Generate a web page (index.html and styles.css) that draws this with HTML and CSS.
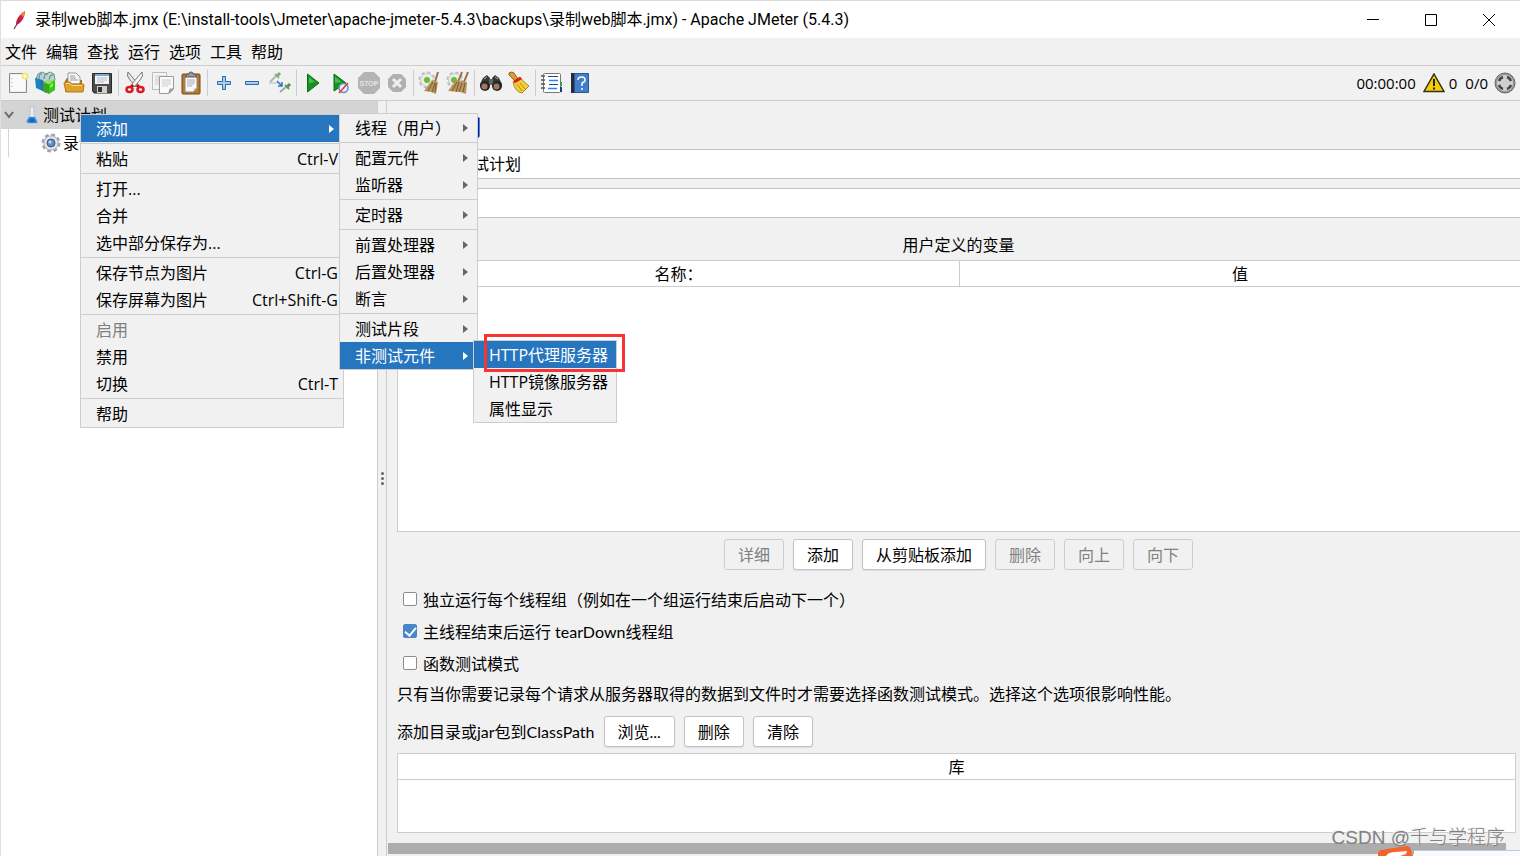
FILE: index.html
```html
<!DOCTYPE html>
<html lang="zh-CN">
<head>
  <meta charset="UTF-8">
  <meta name="viewport" content="width=device-width, initial-scale=1.0">
  <title>Apache JMeter (5.4.3)</title>
  <link rel="stylesheet" href="styles.css">
</head>
<body>
  <!-- Title bar -->
  <header class="titlebar">
    <svg class="app-icon" viewBox="0 0 16 20">
      <path d="M2 19L5 14" stroke="#7a3b8f" stroke-width="1.3"/>
      <path d="M4 15Q4 9 8 5Q11 2 13 1Q13 5 11 9Q8 14 4 15Z" fill="#d0223c"/>
      <path d="M9 5Q11 2 13 1Q13 4 11 7Z" fill="#f28a2e"/>
      <path d="M4 15Q5 12 6 9L8 11Q6 14 4 15Z" fill="#9b1f6b"/>
    </svg>
    <h1 class="window-title">录制web脚本.jmx (E:\install-tools\Jmeter\apache-jmeter-5.4.3\backups\录制web脚本.jmx) - Apache JMeter (5.4.3)</h1>
    <div class="window-buttons">
      <button aria-label="最小化"><svg viewBox="0 0 12 12"><path d="M0 5.5H12" stroke="#000"/></svg></button>
      <button aria-label="最大化"><svg viewBox="0 0 12 12"><path d="M.5 .5H11.5V11.5H.5Z" fill="none" stroke="#000"/></svg></button>
      <button aria-label="关闭"><svg viewBox="0 0 12 12"><path d="M0 0L12 12M12 0L0 12" stroke="#000"/></svg></button>
    </div>
  </header>

  <!-- Menu bar -->
  <nav class="menubar">
    <button>文件</button>
    <button>编辑</button>
    <button>查找</button>
    <button>运行</button>
    <button>选项</button>
    <button>工具</button>
    <button>帮助</button>
  </nav>

  <!-- Toolbar -->
  <div class="toolbar">
    <div class="tool-group">
      <button aria-label="新建"><svg viewBox="0 0 24 24">
        <path d="M3.5 2.500H20.500V21.500H3.500Z" fill="#f0f0f0" stroke="#8b8b8b"/>
        <path d="M5 4H19V20H5Z" fill="#fafafa"/><path d="M6 7V8M6 11V12M6 15V16" stroke="#aaa"/>
        <circle cx="19" cy="5" r="3.500" fill="#f6e67c"/><circle cx="19" cy="5" r="1.500" fill="#fffde0"/>
      </svg></button>
      <button aria-label="模板"><svg viewBox="0 0 24 24">
        <path d="M2 8L4 3L8 1L12 3L16 1L20 3L21 9L13 12Z" fill="#b9d3d8" stroke="#6f8d92"/>
        <path d="M5 8Q5 2 8 3M10 8Q10 2 14 3M15 8Q16 3 19 4" fill="none" stroke="#567d84"/>
        <path d="M1 7L9 9V20L2 17Z" fill="#1887b8"/><path d="M6 9L12 11V22L7 19Z" fill="#2b6fc0"/>
        <path d="M9 11L15 13V23L9 20Z" fill="#3ca51e"/><path d="M9 11L15 8L21 9L15 13Z" fill="#95dc69"/>
        <path d="M15 13L21 9V19L15 23Z" fill="#35c90f"/><path d="M16 14L19 12V15L16 17Z" fill="#8af062"/>
      </svg></button>
      <button aria-label="打开"><svg viewBox="0 0 24 24">
        <path d="M3 10L5 7H9L10 9H20V21H3Z" fill="#9e6910"/>
        <path d="M6 2H14L18 6V13H6Z" fill="#fafafa" stroke="#999"/><path d="M8 5H13M8 7H14M8 9H16" stroke="#999"/>
        <path d="M2 12Q2 11 4 11H8L10 13H21Q22 13 22 15L21 21H4Z" fill="#dda42c" stroke="#b57918"/>
        <path d="M4 12.500H8L10 14.500H20" fill="none" stroke="#f9db8c"/>
      </svg></button>
      <button aria-label="保存"><svg viewBox="0 0 24 24">
        <path d="M2.500 2.500H21.500V22H4L2.500 20Z" fill="#4c4c4c" stroke="#292929"/>
        <path d="M5 3H19V13H5Z" fill="#f0f4f7"/><path d="M5 3H19V5H5Z" fill="#79a8d2"/>
        <path d="M7 7H17M7 9H17M7 11H14" stroke="#b5c2cc"/>
        <path d="M7 15H17V22H7Z" fill="#d0d0d0"/><path d="M8 16H12V21H8Z" fill="#333"/>
      </svg></button>
    </div>
    <div class="tool-group">
      <button aria-label="剪切"><svg viewBox="0 0 24 24">
        <path d="M5 1Q3 5 7 9L13 16L15 13Z" fill="#e6e6e6" stroke="#777"/><path d="M19 1Q21 5 17 9L11 16L9 13Z" fill="#fafafa" stroke="#777"/>
        <path d="M10 14L8 16M14 14L16 16" stroke="#c40812" stroke-width="3"/>
        <ellipse cx="6.500" cy="18.500" rx="3" ry="2.500" fill="#eee" stroke="#dc1a22" stroke-width="2.500"/>
        <ellipse cx="17.500" cy="18.500" rx="3" ry="2.500" fill="#eee" stroke="#dc1a22" stroke-width="2.500"/>
      </svg></button>
      <button aria-label="复制"><svg viewBox="0 0 24 24">
        <path d="M1.500 1.500H15.500V18.500H1.500Z" fill="#f5f5f5" stroke="#bbb"/><path d="M4 5H13M4 7H13M4 9H8M4 11H8M4 13H8" stroke="#ccc"/>
        <path d="M8.500 5.500H22.500V18L18 22.500H8.500Z" fill="#fafafa" stroke="#999"/><path d="M11 9H20M11 11H20M11 13H20M11 15H17" stroke="#ccc"/>
        <path d="M18 22L19 18H22Z" fill="#ccc" stroke="#888"/>
      </svg></button>
      <button aria-label="粘贴"><svg viewBox="0 0 24 24">
        <rect x="3" y="3" width="18" height="20" rx="1" fill="#b77a28" stroke="#764a0f"/>
        <path d="M6 5H18V17L14 21H6Z" fill="#fafafa" stroke="#888"/>
        <path d="M8 9H16M8 11H16M8 13H15M8 15H13" stroke="#aaa"/><path d="M14 21L15 17H18Z" fill="#ccc"/>
        <path d="M8 3H10Q10 1 12 1Q14 1 14 3H16L18 6H6Z" fill="#999" stroke="#555"/>
      </svg></button>
    </div>
    <div class="tool-group">
      <button aria-label="展开"><svg viewBox="0 0 24 24"><path d="M10.500 5.500H13.500V10.500H18.500V13.500H13.500V18.500H10.500V13.500H5.500V10.500H10.500Z" fill="#a8ccec" stroke="#3067ae"/></svg></button>
      <button aria-label="收起"><svg viewBox="0 0 24 24"><path d="M5.500 10.500H18.500V13.500H5.500Z" fill="#a8ccec" stroke="#3067ae"/></svg></button>
      <button aria-label="切换"><svg viewBox="0 0 24 24">
        <path d="M2 11L8 5" stroke="#b5b5b5" stroke-width="2"/><path d="M7 3L11 7" stroke="#8ab87d" stroke-width="2"/><path d="M9 5L12 2" stroke="#7cae6e" stroke-width="3"/>
        <path d="M1 12H10" stroke="#bbb"/><path d="M9 10L14 15M14 11V15H10" fill="none" stroke="#2876d2" stroke-width="1.500"/>
        <path d="M12 21L18 16" stroke="#a5a5a5" stroke-width="2"/><path d="M17 14L21 18" stroke="#6b9c60" stroke-width="2"/><path d="M19 16L22 13" stroke="#5d9150" stroke-width="3"/>
      </svg></button>
    </div>
    <div class="tool-group">
      <button aria-label="启动"><svg viewBox="0 0 24 24"><path d="M6.500 3V21L18 12Z" fill="#159321" stroke="#087014"/><path d="M8 6V12L14 11Z" fill="#4bbb50"/></svg></button>
      <button aria-label="不停顿开始"><svg viewBox="0 0 24 24">
        <path d="M5 3V20L17 12Z" fill="#159321" stroke="#087014"/><path d="M6 6V12L13 11Z" fill="#4bbb50"/>
        <circle cx="14.500" cy="17" r="4.500" fill="#e8edf8" stroke="#6b8abf" stroke-width="1.500"/><path d="M10 22L19 12" stroke="#d73934" stroke-width="1.500"/>
      </svg></button>
      <button aria-label="停止" disabled><svg viewBox="0 0 24 24">
        <path d="M7 1H17L23 7V17L17 23H7L1 17V7Z" fill="#b4b4b4"/>
        <text x="12" y="15" class="stop-text">STOP</text>
      </svg></button>
      <button aria-label="关闭线程" disabled><svg viewBox="0 0 24 24">
        <path d="M8 3H16L21 8V16L16 21H8L3 16V8Z" fill="#b0b0b0"/><path d="M8 8L16 16M16 8L8 16" stroke="#eee" stroke-width="3"/>
      </svg></button>
    </div>
    <div class="tool-group">
      <button aria-label="清除"><svg viewBox="0 0 24 24">
        <circle cx="9" cy="9" r="7" fill="none" stroke="#bdbdbd" stroke-width="3" stroke-dasharray="3 2.500"/><circle cx="9" cy="9" r="6.500" fill="#ececec" stroke="#ccc"/><circle cx="9" cy="9" r="3" fill="#63bd35"/>
        <path d="M20 1L17 11" stroke="#9a6f42" stroke-width="2"/><path d="M14 9L20 11L18 23L13 21L6 20Z" fill="#b8945f"/><path d="M15 11L10 20M17 12L14 21M18 12L17 21" stroke="#7a5833"/>
      </svg></button>
      <button aria-label="清除全部"><svg viewBox="0 0 24 24">
        <circle cx="9" cy="9" r="7" fill="none" stroke="#bdbdbd" stroke-width="3" stroke-dasharray="3 2.500"/><circle cx="9" cy="9" r="6.500" fill="#ececec" stroke="#ccc"/><circle cx="8" cy="9" r="3" fill="#63bd35"/>
        <path d="M16 1L12 11M22 1L18 11" stroke="#9a6f42" stroke-width="2"/><path d="M10 9L21 11L20 23L14 21L2 20Z" fill="#b8945f"/><path d="M11 11L6 20M13 11L10 21M16 12L13 21M19 12L17 21" stroke="#7a5833"/>
      </svg></button>
    </div>
    <div class="tool-group">
      <button aria-label="查找"><svg viewBox="0 0 24 24">
        <path d="M4 7L8 4L11 7V16H1V13ZM20 7L16 4L13 7V16H23V13Z" fill="#383838"/><path d="M10 8H14V14H10Z" fill="#666"/>
        <circle cx="6" cy="15" r="5" fill="#262626"/><circle cx="18" cy="15" r="5" fill="#262626"/>
        <circle cx="5.500" cy="15.500" r="3" fill="#a27662"/><circle cx="17.500" cy="15.500" r="3" fill="#a27662"/>
        <path d="M5 8L8 6M16 6L19 8" stroke="#aaa"/>
      </svg></button>
      <button aria-label="重置查找"><svg viewBox="0 0 24 24">
        <path d="M2 2Q5 0 7 2L11 8L8 10L2 4Z" fill="#d99b36" stroke="#9a601a"/>
        <path d="M6 11L13 6Q16 11 22 15L15 22Q8 21 6 11Z" fill="#f0cf39" stroke="#af8912"/>
        <path d="M7 11L14 7" stroke="#d82017" stroke-width="3"/><path d="M10 13L15 20M13 12L18 18" stroke="#b58d15"/>
      </svg></button>
    </div>
    <div class="tool-group">
      <button aria-label="函数助手"><svg viewBox="0 0 24 24">
        <rect x="3.500" y="2.500" width="17" height="19" rx="1" fill="#fff" stroke="#777"/>
        <path d="M1 5H5M1 9H5M1 13H5M1 17H5" stroke="#555" stroke-width="1.500"/>
        <path d="M8 5.500H18M9 13.500H18" stroke="#174f91"/><path d="M9 9.500H18M8 17.500H17" stroke="#3184ec" stroke-width="1.500"/>
        <path d="M21 11V15" stroke="#27a537" stroke-width="2"/><path d="M21 16V21" stroke="#163d83" stroke-width="2"/>
      </svg></button>
      <button aria-label="帮助"><svg viewBox="0 0 24 24">
        <path d="M3 2H7V22H3Z" fill="#242d38"/><path d="M6.500 2.500H20.500V21.500H6.500Z" fill="#427fc9" stroke="#295694"/>
        <path d="M10 9Q10 6 13.500 6Q17 6 17 9Q17 11 14 12V15M14 17V19" fill="none" stroke="#fff" stroke-width="1.500"/>
      </svg></button>
    </div>
    <div class="status">
      <span class="timer">00:00:00</span>
      <svg class="warning" viewBox="0 0 22 20"><path d="M11 1L21 18.500H1Z" fill="#f5cd05" stroke="#303020" stroke-width="1.500"/><path d="M11 6V13M11 14.500V16.500" stroke="#222" stroke-width="2"/></svg>
      <span class="errors">0</span>
      <span>0/0</span>
      <svg class="run-state" viewBox="0 0 22 22">
        <circle cx="11" cy="11" r="10" fill="#999" stroke="#666"/><circle cx="11" cy="11" r="8" fill="#cfcfcf"/>
        <path d="M5 9Q6 6 9 5M13 5Q16 6 17 9M17 13Q16 16 13 17M9 17Q6 16 5 13" fill="none" stroke="#444" stroke-width="2.500"/>
      </svg>
    </div>
  </div>

  <main class="workspace">
    <!-- Test plan tree -->
    <aside class="tree">
      <div class="tree-row selected">
        <svg class="chevron" viewBox="0 0 10 10"><path d="M1 2L5 7L9 2" fill="none" stroke="#666" stroke-width="2"/></svg>
        <svg class="flask" viewBox="0 0 16 20"><path d="M5 1H11M6 1V9L2 17Q2 19 4 19H12Q14 19 14 17L10 9V1" fill="#e9f2fa" stroke="#b0c3d4"/><path d="M5 12H11L14 18Q13 19 11 19H4Q2 19 2 17Z" fill="#2f86db"/><ellipse cx="8" cy="16" rx="3" ry="2" fill="#1464c2"/></svg>
        <span>测试计划</span>
      </div>
      <div class="tree-row child">
        <svg class="gear" viewBox="0 0 20 20"><circle cx="10" cy="10" r="8" fill="#d9dcdf" stroke="#9ea2a7" stroke-width="3" stroke-dasharray="3.500 2.800"/><circle cx="10" cy="10" r="7" fill="#e3e5e8" stroke="#b5b9bd"/><circle cx="10" cy="10" r="4" fill="#5f8dc4" stroke="#355985"/><circle cx="9" cy="9" r="1.500" fill="#cde0f2"/></svg>
        <span>录制</span>
      </div>
    </aside>
    <div class="splitter"><i></i><i></i><i></i></div>

    <!-- Test plan editor -->
    <section class="editor">
      <h2 class="editor-title">测试计划</h2>
      <div class="field">
        <input type="text" aria-label="名称" value="测试计划">
      </div>
      <div class="field">
        <input type="text" aria-label="注释">
      </div>
      <h3 class="table-title">用户定义的变量</h3>
      <div class="variables">
        <table>
          <thead><tr><th>名称：</th><th>值</th></tr></thead>
        </table>
      </div>
      <div class="table-buttons">
        <button class="btn" disabled>详细</button>
        <button class="btn">添加</button>
        <button class="btn">从剪贴板添加</button>
        <button class="btn" disabled>删除</button>
        <button class="btn" disabled>向上</button>
        <button class="btn" disabled>向下</button>
      </div>
      <div class="options">
        <label><input type="checkbox">独立运行每个线程组（例如在一个组运行结束后启动下一个）</label>
        <label><input type="checkbox" checked>主线程结束后运行 tearDown线程组</label>
        <label><input type="checkbox">函数测试模式</label>
      </div>
      <p class="hint">只有当你需要记录每个请求从服务器取得的数据到文件时才需要选择函数测试模式。选择这个选项很影响性能。</p>
      <div class="classpath">
        <span>添加目录或jar包到ClassPath</span>
        <button class="btn">浏览...</button>
        <button class="btn">删除</button>
        <button class="btn">清除</button>
      </div>
      <div class="library">
        <table>
          <thead><tr><th>库</th></tr></thead>
        </table>
      </div>
      <div class="scrollbar"></div>
    </section>
  </main>

  <!-- Context menu and its submenus -->
  <ul class="menu menu-context">
    <li><button class="active has-sub">添加</button></li>
    <li class="line"><button>粘贴<kbd>Ctrl-V</kbd></button></li>
    <li class="line"><button>打开...</button></li>
    <li><button>合并</button></li>
    <li><button>选中部分保存为...</button></li>
    <li class="line"><button>保存节点为图片<kbd>Ctrl-G</kbd></button></li>
    <li><button>保存屏幕为图片<kbd>Ctrl+Shift-G</kbd></button></li>
    <li class="line"><button disabled>启用</button></li>
    <li><button>禁用</button></li>
    <li><button>切换<kbd>Ctrl-T</kbd></button></li>
    <li class="line"><button>帮助</button></li>
  </ul>
  <ul class="menu menu-add">
    <li><button class="has-sub">线程（用户）</button></li>
    <li class="line"><button class="has-sub">配置元件</button></li>
    <li><button class="has-sub">监听器</button></li>
    <li class="line"><button class="has-sub">定时器</button></li>
    <li class="line"><button class="has-sub">前置处理器</button></li>
    <li><button class="has-sub">后置处理器</button></li>
    <li><button class="has-sub">断言</button></li>
    <li class="line"><button class="has-sub">测试片段</button></li>
    <li><button class="active has-sub">非测试元件</button></li>
  </ul>
  <ul class="menu menu-nontest">
    <li><button class="active">HTTP代理服务器</button></li>
    <li><button>HTTP镜像服务器</button></li>
    <li><button>属性显示</button></li>
  </ul>
  <div class="highlight"></div>

  <div class="ime-bar">
    <svg class="ime-logo" viewBox="0 0 36 10"><path d="M0 10V7Q0 5 3 4L28 0Q32 0 33 4L35 10Z" fill="#f4642c"/><path d="M8 10Q10 6 18 6L29 5L28 8L22 10Z" fill="#fff"/></svg>
    <div class="ime-panel"></div>
  </div>
  <div class="watermark">CSDN @千与学程序</div>
</body>
</html>
```
FILE: styles.css
```css
* {
  box-sizing: border-box;
}

body {
  margin: 0;
  height: 100vh;
  display: flex;
  flex-direction: column;
  overflow: hidden;
  position: relative;
  border-top: 1px solid #dcdcdc;
  border-left: 1px solid #e0e0e0;
  background-color: #f1f1f1;
  color: #000;
  font-family: "Open Sans", "Noto Sans CJK SC", sans-serif;
  font-size: 16px;
  line-height: 24px;
}

h1, h2, h3, p, ul {
  margin: 0;
  padding: 0;
  font-size: 16px;
  font-weight: normal;
}

button, input, kbd {
  font-family: inherit;
  font-size: inherit;
  line-height: inherit;
  color: inherit;
}

button {
  border: none;
  background: none;
  padding: 0;
}

svg {
  display: block;
}

/* Title bar */
.titlebar {
  display: flex;
  align-items: center;
  height: 37px;
  flex: none;
  padding-left: 11px;
  padding-right: 2px;
  background-color: #fff;
}

.app-icon {
  width: 16px;
  height: 20px;
  margin-right: 7px;
}

.window-title {
  flex: 1;
  white-space: nowrap;
  font-family: Roboto, "Noto Sans CJK SC", sans-serif;
}

.window-buttons {
  display: flex;
}

.window-buttons button {
  width: 58px;
  height: 36px;
  display: flex;
  align-items: center;
  justify-content: center;
}

.window-buttons svg {
  width: 12px;
  height: 12px;
}

/* Menu bar */
.menubar {
  display: flex;
  flex: none;
  gap: 9px;
  height: 28px;
  padding-left: 4px;
  border-bottom: 1px solid #cdcdcd;
}

/* Toolbar */
.toolbar {
  display: flex;
  align-items: center;
  flex: none;
  height: 35px;
  padding-left: 3px;
  border-bottom: 1px solid #cdcdcd;
}

.tool-group {
  display: flex;
}

.tool-group + .tool-group {
  border-left: 1px solid #cdcdcd;
  margin-left: 2px;
  padding-left: 2px;
}

.tool-group button {
  width: 28px;
  height: 26px;
  display: flex;
  align-items: center;
  justify-content: center;
}

.tool-group svg {
  width: 24px;
  height: 24px;
}

.stop-text {
  font: bold 7px "Liberation Sans", sans-serif;
  fill: #e4e4e4;
  text-anchor: middle;
}

.status {
  display: flex;
  align-items: center;
  margin-left: auto;
  padding-right: 4px;
  font-size: 15px;
}

.warning {
  width: 22px;
  height: 20px;
  margin: 0 4px 0 7px;
}

.errors {
  margin-right: 8px;
}

.run-state {
  width: 22px;
  height: 22px;
  margin-left: 6px;
}

/* Workspace */
.workspace {
  flex: 1;
  display: flex;
  min-height: 0;
}

.tree {
  flex: none;
  width: 376px;
  background-color: #fff;
}

.tree-row {
  display: flex;
  align-items: center;
  height: 28px;
}

.tree-row.selected {
  background-color: #d4d4d4;
}

.chevron {
  width: 10px;
  height: 10px;
  margin: 0 10px 0 3px;
}

.flask {
  width: 16px;
  height: 18px;
  margin-right: 3px;
}

.tree-row.child {
  margin-left: 7px;
  padding-left: 32px;
  border-left: 1px solid #d4d4d4;
}

.gear {
  width: 20px;
  height: 20px;
  margin-right: 2px;
}

.splitter {
  flex: none;
  width: 10px;
  display: flex;
  flex-direction: column;
  align-items: center;
  justify-content: center;
  gap: 2px;
  border-left: 1px solid #cdcdcd;
  border-right: 1px solid #cdcdcd;
}

.splitter i {
  width: 3px;
  height: 3px;
  border-radius: 2px;
  background-color: #666;
}

/* Editor */
.editor {
  flex: 1;
  min-width: 0;
  display: flex;
  flex-direction: column;
  padding: 10px 0 2px 10px;
  font-family: Lato, "Noto Sans CJK SC", sans-serif;
}

.editor-title {
  height: 38px;
  line-height: 32px;
  font-size: 21px;
  font-weight: bold;
  color: #1a1a8c;
}

.field {
  display: flex;
  height: 30px;
  margin-bottom: 9px;
  padding-left: 52px;
}

.field input {
  flex: 1;
  min-width: 0;
  padding: 0 7px;
  border: 1px solid #c3c3c3;
  border-right: none;
  background-color: #fff;
}

.table-title {
  margin-top: 6px;
  padding-bottom: 3px;
  text-align: center;
}

.variables {
  flex: 1;
  border: 1px solid #cdcdcd;
  border-right: none;
  background-color: #fff;
}

table {
  width: 100%;
  table-layout: fixed;
  border-collapse: separate;
  border-spacing: 0;
}

th {
  height: 26px;
  padding: 0;
  font-weight: normal;
  border-bottom: 1px solid #cdcdcd;
}

th + th {
  border-left: 1px solid #cdcdcd;
}

.table-buttons {
  display: flex;
  justify-content: center;
  gap: 9px;
  margin: 7px 0 14px;
}

.btn {
  height: 31px;
  padding: 0 13px;
  border: 1px solid #c3c3c3;
  border-radius: 3px;
  background-color: #fff;
  box-shadow: 0 1px 1px #ddd;
}

.btn:disabled {
  background-color: #f1f1f1;
  border-color: #cdcdcd;
  color: #808080;
  box-shadow: none;
}

.options label {
  display: flex;
  align-items: center;
  height: 32px;
}

.options input {
  appearance: none;
  width: 14px;
  height: 14px;
  margin: 0 6px 2px;
  border: 1px solid #8c8c8c;
  border-radius: 2px;
  background-color: #fff;
}

.options input:checked {
  border-color: #4786c9;
  background-color: #4786c9;
}

.options input:checked::before {
  content: "";
  display: block;
  width: 5px;
  height: 9px;
  margin-left: 3px;
  border: solid #fff;
  border-width: 0 2px 2px 0;
  transform: rotate(40deg);
}

.hint {
  margin: 2px 0 10px;
}

.classpath {
  display: flex;
  align-items: center;
  gap: 9px;
}

.library {
  height: 80px;
  margin: 6px 4px 10px 0;
  border: 1px solid #cdcdcd;
  background-color: #fff;
}

.scrollbar {
  height: 11px;
  margin: 0 14px 0 -9px;
  background-color: #adadad;
}

/* Popup menus */
.menu {
  position: absolute;
  list-style: none;
  border: 1px solid #cdcdcd;
  background-color: #f1f1f1;
}

.menu-context {
  left: 79px;
  top: 113px;
  width: 264px;
}

.menu-add {
  left: 338px;
  top: 112px;
  width: 139px;
}

.menu-nontest {
  left: 472px;
  top: 339px;
  width: 144px;
}

.menu .line {
  margin-top: 1px;
  padding-top: 1px;
  border-top: 1px solid #cdcdcd;
}

.menu button {
  display: flex;
  align-items: center;
  width: 100%;
  height: 27px;
  padding: 0 5px 0 15px;
  white-space: nowrap;
}

.menu button:disabled {
  color: #808080;
}

.menu .active {
  background-color: #2675bf;
  color: #fff;
}

.menu kbd {
  margin-left: auto;
}

.menu .has-sub::after {
  content: "";
  margin-left: auto;
  margin-right: 4px;
  border: 4px solid transparent;
  border-left: 5px solid #666;
  border-right: none;
}

.menu .active.has-sub::after {
  border-left-color: #fff;
}

.highlight {
  position: absolute;
  left: 483px;
  top: 333px;
  width: 141px;
  height: 38px;
  border: 3px solid #fb3232;
}

/* Input method bar peeking in from the bottom */
.ime-bar {
  position: absolute;
  right: 0;
  bottom: 0;
  display: flex;
  align-items: flex-end;
}

.ime-logo {
  width: 36px;
  height: 10px;
}

.ime-panel {
  width: 106px;
  height: 6px;
  border-top: 1px solid #b9cbe6;
  background-color: #fafafa;
}

.watermark {
  position: absolute;
  right: 15px;
  bottom: 6px;
  font-family: "Liberation Sans", "Noto Sans CJK SC", sans-serif;
  font-size: 19px;
  font-weight: 300;
  color: #808080;
  text-shadow: -1px -1px 0 #eee;
}
```
